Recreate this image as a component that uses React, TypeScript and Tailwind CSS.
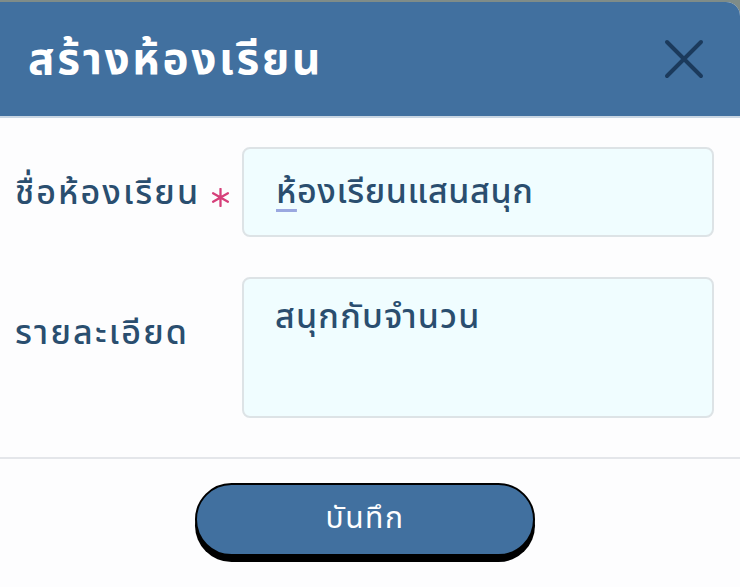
import React, { useState } from 'react';

const thaiFont = { fontFamily: '"Noto Sans Thai", "Noto Sans", "DejaVu Sans", sans-serif' };

const CreateClassroomModal: React.FC = () => {
  const [name, setName] = useState('ห้องเรียนแสนสนุก');
  const [detail, setDetail] = useState('สนุกกับจำนวน');

  return (
    <div className="w-[740px] h-[587px] bg-[#7f8c88] pt-[2px] overflow-hidden" style={thaiFont}>
      <div className="flex flex-col h-full bg-[#fdfdfe] rounded-tr-[14px] overflow-hidden">
        {/* หัวข้อ */}
        <div className="flex items-center justify-between h-[116px] bg-[#41709f] border-b-2 border-[#c9d6e3] pl-[28px] pr-[36px]">
          <h1 className="text-[44px] font-bold tracking-[2.7px] text-white leading-none pt-[4px]">สร้างห้องเรียน</h1>
          <button type="button" className="text-[#1b3a5c]">
            <svg width="40" height="40" viewBox="0 0 40 40" fill="none" stroke="currentColor" strokeWidth="4" strokeLinecap="round">
              <path d="M3 3L37 37M37 3L3 37" />
            </svg>
          </button>
        </div>

        {/* ฟอร์ม */}
        <div className="flex flex-col gap-[40px] pl-[15px] pr-[26px] pt-[29px] pb-[39px] border-b-2 border-[#e4e6ea]">
          <div className="flex items-center">
            <label className="w-[227px] flex items-center text-[34px] font-medium tracking-[2.1px] text-[#2a4e6f] pt-[2px]">
              ชื่อห้องเรียน
              <svg className="ml-[11px] mt-[8px]" width="19" height="19" viewBox="0 0 20 20" stroke="#d6407a" strokeWidth="2.4" strokeLinecap="round">
                <path d="M10 1V19M2.2 5.5L17.8 14.5M17.8 5.5L2.2 14.5" />
              </svg>
            </label>
            <div className="flex-1 h-[90px] flex items-center px-[32px] bg-[#f0fdff] border-2 border-[#dde3e6] rounded-[8px] text-[34px] font-medium tracking-[0.6px] text-[#2a4e6f]">
              <span className="underline decoration-[#9aa8e0] decoration-[3px] underline-offset-[6px]">{name.slice(0, 2)}</span>
              <span>{name.slice(2)}</span>
            </div>
          </div>
          <div className="flex items-start">
            <label className="w-[227px] pt-[31px] text-[34px] font-medium tracking-[2.2px] text-[#2a4e6f]">รายละเอียด</label>
            <textarea
              className="flex-1 h-[141px] px-[31px] py-[13px] bg-[#f0fdff] border-2 border-[#dde3e6] rounded-[8px] text-[34px] font-medium tracking-[1.2px] text-[#2a4e6f] resize-none outline-none"
              style={thaiFont}
              value={detail}
              onChange={(e) => setDetail(e.target.value)}
            />
          </div>
        </div>

        {/* ปุ่มบันทึก */}
        <div className="flex justify-center pt-[24px] pr-[10px]">
          <button
            type="button"
            onClick={() => setName(name)}
            className="w-[340px] h-[73px] rounded-full bg-[#41709f] border-2 border-black shadow-[0_6px_0_#000] text-white text-[30px] tracking-[1.5px]"
            style={thaiFont}
          >
            บันทึก
          </button>
        </div>
      </div>
    </div>
  );
};

export default function App() {
  return <CreateClassroomModal />;
}
